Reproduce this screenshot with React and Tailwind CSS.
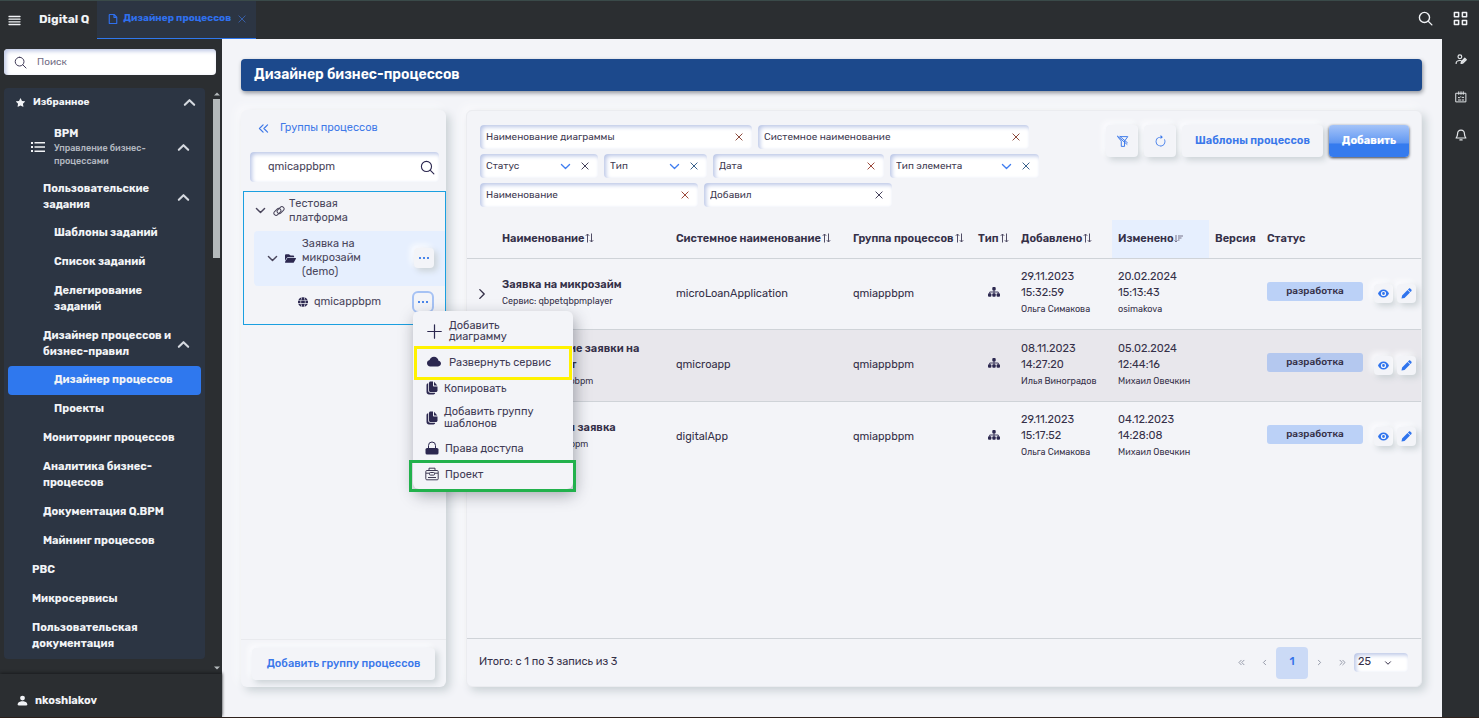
import { BsStarFill, BsPersonFill, BsCloudFill, BsArrowClockwise } from "react-icons/bs";
import { FaFolderOpen, FaGlobe } from "react-icons/fa6";
import { PiFileBold } from "react-icons/pi";

const Stroke = ({ d, size = 16, width = 1.5, box = 16, className = "" }) => (
  <svg width={size} height={size} viewBox={`0 0 ${box} ${box}`} fill="none" stroke="currentColor"
    strokeWidth={width} strokeLinecap="round" strokeLinejoin="round" className={`shrink-0 ${className}`} aria-hidden="true">
    <path d={d} />
  </svg>
);

const SEARCH = "M6.9 1.5a5.4 5.4 0 1 1 0 10.8a5.4 5.4 0 0 1 0-10.8M10.8 10.8l4 4";
const UP = "M3 10.5l5-5l5 5";
const DOWN = "M3 5.5l5 5l5-5";
const RIGHT = "M5.5 3l5 5l-5 5";
const CROSS = "M3 3l10 10M13 3l-10 10";

const menu = [
  { text: "Шаблоны заданий", level: 3 },
  { text: "Список заданий", level: 3 },
  { text: "Делегирование заданий", level: 3, narrow: true },
  { text: "Дизайнер процессов и бизнес-правил", level: 2, open: true },
  { text: "Дизайнер процессов", level: 3, active: true },
  { text: "Проекты", level: 3 },
  { text: "Мониторинг процессов", level: 2 },
  { text: "Аналитика бизнес-процессов", level: 2, narrow: true },
  { text: "Документация Q.BPM", level: 2 },
  { text: "Майнинг процессов", level: 2 },
  { text: "РВС", level: 1 },
  { text: "Микросервисы", level: 1 },
  { text: "Пользовательская документация", level: 1, narrow: true },
];
const indent = { 1: "pl-6", 2: "pl-[35px]", 3: "pl-[46px]" };

const Chevron = () => <Stroke d={UP} size={15} width={2.2} className="text-[#d5d9df]" />;

function MenuItem({ text, level, open, active, narrow }) {
  return (
    <li>
      <a href="#" aria-current={active ? "page" : undefined}
        className={`flex items-center justify-between rounded pr-2.5 pt-1.5 ${open ? "pb-1.5" : "pb-[7px]"} ${indent[level]} ${active ? "bg-[#2f78ee]" : ""}`}>
        <span className={narrow ? "w-[120px]" : "whitespace-normal"}>{text}</span>
        {open && <Chevron />}
      </a>
    </li>
  );
}

function Sidebar() {
  return (
    <aside className="flex w-[222px] shrink-0 flex-col bg-[#2b2e31] text-[11px] font-bold leading-4 text-[#f1f3f6]">
      <label className="ml-1 mr-1.5 mt-2.5 flex h-[26px] items-center gap-2.5 rounded bg-white pl-2.5 shadow-[inset_2px_2px_4px_#bcc6e4]">
        <Stroke d={SEARCH} size={13} width={1.2} className="text-[#3b3553]" />
        <input aria-label="Поиск" placeholder="Поиск" className="w-full bg-transparent text-[10px] font-normal outline-none placeholder:text-[#716d84]" />
      </label>
      <div className="mt-[13px] flex flex-1 pb-1">
        <nav className="ml-1 w-[201px] self-start rounded bg-[#2c3543] px-1">
          <button className="flex h-7 w-full items-center pl-2 pr-1 text-left text-[10px]">
            <BsStarFill className="mr-2 size-[9px]" />
            <span className="flex-1">Избранное</span>
            <Chevron />
          </button>
          <ul>
            <li>
              <a href="#" className="flex items-center pb-[7px] pl-[22px] pr-2.5 pt-2.5">
                <svg width="16" height="12" viewBox="0 0 16 12" fill="currentColor" className="mr-2 shrink-0" aria-hidden="true">
                  <path d="M1 1h2v2H1zM1 5h2v2H1zM1 9h2v2H1zM4.500 1h10.500v1.600H4.500zM4.500 5.200h10.500v1.600H4.500zM4.500 9.400h10.500v1.600H4.500z" />
                </svg>
                <span className="flex-1">
                  BPM
                  <span className="block text-[9px] font-medium leading-[13px] text-[#b4b9c1]">Управление бизнес-<br />процессами</span>
                </span>
                <Chevron />
              </a>
            </li>
            <li>
              <a href="#" className="flex items-center justify-between pb-1.5 pl-[35px] pr-2.5 pt-1.5">
                <span className="w-[120px]">Пользовательские задания</span>
                <Chevron />
              </a>
            </li>
            {menu.map((m) => <MenuItem key={m.text} {...m} />)}
          </ul>
        </nav>
        <div className="ml-2 flex w-[7px] flex-col items-center text-[#b4b9bb]" aria-hidden="true">
          <svg width="6" height="4" viewBox="0 0 6 4" className="mb-[3px] mt-1"><path d="M0 3.5L3 .5L6 3.5z" fill="currentColor" /></svg>
          <div className="h-[159px] w-full bg-[#b4b9bb]" />
          <svg width="6" height="4" viewBox="0 0 6 4" className="mt-auto"><path d="M0 .5L3 3.5L6 .5z" fill="currentColor" /></svg>
        </div>
      </div>
      <div className="flex h-[43px] items-center gap-1.5 pl-4 pt-2.5 shadow-[0_-1px_3px_#191b1d]">
        <BsPersonFill className="size-[13px]" />
        nkoshlakov
      </div>
    </aside>
  );
}

const raised = "bg-[#f3f4f8] shadow-[3px_3px_6px_#cbd2d6,-3px_-3px_6px_#fdfdff]";
const inset = "bg-white shadow-[inset_2px_2px_4px_#b9c5e6]";

function Dots({ active }) {
  return (
    <button aria-label="Действия" className={`flex items-center justify-center gap-0.5 ${active ? "size-[22px] rounded-md border-2 border-[#a6c2f4] bg-[#f3f4f8]" : "size-5 rounded " + raised}`}>
      <i className="size-0.5 bg-[#4b86ea]" /><i className="size-0.5 bg-[#4b86ea]" /><i className="size-0.5 bg-[#4b86ea]" />
    </button>
  );
}

const LockIcon = () => (
  <svg width="14" height="14" viewBox="0 0 14 14" aria-hidden="true">
    <path d="M3.500 7.500V4.500a3.500 3.500 0 0 1 7 0v3" fill="none" stroke="currentColor" />
    <rect x=".5" y="7" width="13" height="6.500" rx="1.600" fill="currentColor" />
  </svg>
);
const CopyIcon = () => (
  <svg width="12" height="14" viewBox="0 0 12 14" className="shrink-0 text-[#2c2850]" aria-hidden="true">
    <path fill="currentColor" d="M4.500.5H7V4.500c0 .6.400 1 1 1h3.500V9.500c0 .8-.7 1.500-1.500 1.500H4.500C3.700 11 3 10.300 3 9.500V2C3 1.200 3.700.5 4.500.5M8 .7l3.300 3.800H8z" />
    <path fill="currentColor" d="M2.200 2.200v7.600c0 1.100.9 2 2 2h5c-.1 1-.8 1.700-1.700 1.700H3C1.600 13.500.5 12.400.5 11V4c0-.9.700-1.700 1.700-1.800" />
  </svg>
);
const CaseIcon = () => (
  <svg width="14" height="14" viewBox="0 0 14 14" fill="none" stroke="currentColor" className="shrink-0" aria-hidden="true">
    <rect x=".8" y="3.500" width="12.400" height="9.300" rx="1" />
    <path d="M4 3.300V1.200h6v2.100M1 6.200h3.500M9.500 6.200H13M3 10.500h8" />
    <rect x="4.500" y="5.500" width="5" height="2.600" rx=".8" />
  </svg>
);

function ContextMenu() {
  const item = "flex w-full items-center text-left";
  return (
    <div role="menu" className="absolute left-px top-5 z-10 w-40 rounded-md bg-[#f3f4f8] pt-[7px] text-[11px] leading-[11px] text-[#3f3b55] shadow-[2px_6px_16px_rgba(40,45,60,0.4)]">
      <button role="menuitem" className={`${item} h-7 gap-[7px] pb-0.5 pl-3.5 pr-8`}>
        <Stroke d="M8 .8v14.400M.8 8h14.400" size={15} width={1.300} className="text-[#2c2850]" />Добавить диаграмму
      </button>
      <button role="menuitem" className="ml-px flex h-[34px] w-[158px] items-center gap-2 border-[3px] border-[#fff200] pb-0.5 pl-2.5 text-left">
        <BsCloudFill className="size-3.5 shrink-0 text-[#2c2850]" />Развернуть сервис
      </button>
      <button role="menuitem" className={`${item} h-4 gap-1.5 pl-[13px]`}>
        <CopyIcon />Копировать
      </button>
      <button role="menuitem" className={`${item} mt-2 h-7 gap-1.5 pl-[13px] pr-5 leading-3`}>
        <CopyIcon />Добавить группу шаблонов
      </button>
      <button role="menuitem" className={`${item} mt-1.5 h-5 gap-1.5 pl-3`}>
        <span className="text-[#2c2850]"><LockIcon /></span>Права доступа
      </button>
      <button role="menuitem" className="-mb-[3px] -ml-1 mt-0.5 flex h-8 w-[167px] items-center gap-1.5 border-[3px] border-[#22b14c] pb-1 pl-[13px] text-left">
        <CaseIcon />Проект
      </button>
    </div>
  );
}

function Groups() {
  return (
    <section className="flex w-[205px] shrink-0 flex-col rounded-md bg-[#f3f4f8] text-[#4a465c] shadow-[4px_4px_8px_#cbd2d6,-4px_-4px_8px_#fafafc]">
      <button className="flex h-9 items-center gap-2.5 pl-4 pt-px text-[11px] text-[#3f79e8]">
        <Stroke d="M7.500 3.500L3 8l4.500 4.500M13 3.500L8.500 8l4.500 4.500" size={13} />Группы процессов
      </button>
      <label className={`ml-[9px] mr-[7px] mt-1.5 flex h-[30px] items-center rounded pl-[18px] pr-1 ${inset}`}>
        <input aria-label="Поиск группы" defaultValue="qmicappbpm" className="min-w-0 flex-1 bg-transparent text-[11px] outline-none" />
        <Stroke d={SEARCH} size={15} width={1.200} className="text-[#2c2850]" />
      </label>
      <div className="ml-0.5 mt-[9px] h-[134px] border border-[#1a9fe0] text-[11px] leading-[14px]">
        <div className="flex h-[39px] items-center pb-0.5 pl-2.5">
          <Stroke d={DOWN} size={13} width={1.800} className="mr-1.5" />
          <svg width="12" height="12" viewBox="0 0 12 12" fill="none" stroke="currentColor" strokeWidth="1" className="mr-1 shrink-0" aria-hidden="true">
            <rect x="0.400" y="4.700" width="8" height="4.400" rx="2.200" transform="rotate(-45 4.400 6.900)" />
            <rect x="3.600" y="2.900" width="8" height="4.400" rx="2.200" transform="rotate(-45 7.600 5.100)" />
          </svg>
          <span className="w-20">Тестовая платформа</span>
        </div>
        <div className="ml-2.5 flex h-[55px] items-center rounded-l bg-[#e6effe] pb-px pl-3 pr-[11px]">
          <Stroke d={DOWN} size={13} width={1.800} className="mr-1.5" />
          <FaFolderOpen className="mr-1.5 size-[11px] shrink-0 text-[#2c2850]" />
          <span className="w-[70px] flex-1 pr-12">Заявка на микрозайм (demo)</span>
          <Dots />
        </div>
        <div className="flex h-8 items-center pl-[54px] pr-[11px]">
          <FaGlobe className="mr-1.5 size-2.5 shrink-0 text-[#2c2850]" />
          <span className="flex-1">qmicappbpm</span>
          <div className="relative">
            <Dots active />
            <ContextMenu />
          </div>
        </div>
      </div>
      <div className="mt-auto border-t border-[#e9eaee] px-[11px] pb-[7px] pt-2">
        <button className={`h-8 w-full rounded text-[11px] font-medium text-[#3b78ea] ${raised}`}>Добавить группу процессов</button>
      </div>
    </section>
  );
}

function Filter({ label, width, select, tone = "text-[#44405a]" }) {
  return (
    <div className={`flex h-6 items-center gap-2 rounded pl-1.5 pr-2 text-[#3f3b52] ${inset} ${width}`}>
      {select ? (
        <>
          <select aria-label={label} className="min-w-0 flex-1 appearance-none bg-transparent outline-none"><option>{label}</option></select>
          <Stroke d={DOWN} size={13} width={1.600} className="text-[#3f7df0]" />
        </>
      ) : (
        <input aria-label={label} placeholder={label} className="min-w-0 flex-1 bg-transparent outline-none placeholder:text-[#3f3b52]" />
      )}
      <button aria-label={`Очистить: ${label}`} className={tone}><Stroke d={CROSS} size={10} width={1.600} /></button>
    </div>
  );
}

const SortIcon = () => (
  <svg width="9" height="10" viewBox="0 0 9 10" fill="none" stroke="#514d66" strokeWidth="1" className="ml-px inline-block align-[-1px]" aria-hidden="true">
    <path d="M2.500 9.500V1M.8 2.800L2.500 1l1.700 1.800M6.500.500V9M4.800 7.200L6.500 9l1.700-1.800" />
  </svg>
);
const SortDesc = () => (
  <svg width="9" height="8" viewBox="0 0 9 8" fill="none" stroke="#777389" strokeWidth="1" className="inline-block" aria-hidden="true">
    <path d="M2 0v7M.5 5.500L2 7l1.500-1.500M4 1h5M4 3h3.500M4 5h1.500" />
  </svg>
);
const TreeIcon = () => (
  <svg width="12" height="10" viewBox="0 0 12 10" className="mx-auto text-[#2c2850]" aria-hidden="true">
    <g fill="currentColor">
      <rect x="4.300" y="0" width="3.400" height="3.400" rx="1" />
      <rect x="0" y="6.300" width="3.400" height="3.400" rx="1" />
      <rect x="4.300" y="6.300" width="3.400" height="3.400" rx="1" />
      <rect x="8.600" y="6.300" width="3.400" height="3.400" rx="1" />
    </g>
    <path d="M6 3v3.500M1.700 6.500V5h8.600v1.500" fill="none" stroke="currentColor" strokeWidth=".9" />
  </svg>
);

const rows = [
  { name: "Заявка на микрозайм", service: "qbpetqbpmplayer", sys: "microLoanApplication", group: "qmiappbpm", added: ["29.11.2023", "15:32:59", "Ольга Симакова"], changed: ["20.02.2024", "15:13:43", "osimakova"], expand: true },
  { name: "Рассмотрение заявки на микрокредит", service: "qmicappbpm", sys: "qmicroapp", group: "qmiappbpm", added: ["08.11.2023", "14:27:20", "Илья Виноградов"], changed: ["05.02.2024", "12:44:16", "Михаил Овечкин"] },
  { name: "Электронная заявка", service: "qmiappbpm", sys: "digitalApp", group: "qmiappbpm", added: ["29.11.2023", "15:17:52", "Ольга Симакова"], changed: ["04.12.2023", "14:28:08", "Михаил Овечкин"] },
];

const Stamp = ({ value: [date, time, who] }) => (
  <>{date}<br />{time}<small className="block whitespace-nowrap text-[9px] leading-[17px]">{who}</small></>
);

function Diagrams() {
  const th = "px-1.5 text-left font-semibold whitespace-nowrap";
  return (
    <section className="flex min-w-0 flex-1 flex-col rounded-md border border-[#ebecf0] bg-[#f3f4f8] text-[#353048] shadow-[4px_4px_8px_#cbd2d6,-4px_-4px_8px_#fafafc]">
      <div className="flex items-start justify-between pl-[13px] pr-3 pt-3.5">
        <div className="flex max-w-[564px] flex-wrap gap-x-1.5 gap-y-[5px] text-[10px]">
          <Filter label="Наименование диаграммы" width="w-[272px]" tone="text-[#8c4a3c]" />
          <Filter label="Системное наименование" width="w-[271px]" tone="text-[#8c4a3c]" />
          <Filter label="Статус" width="w-[118px]" select />
          <Filter label="Тип" width="w-[103px]" select tone="text-[#38618c]" />
          <Filter label="Дата" width="w-[171px]" tone="text-[#9c4a3c]" />
          <Filter label="Тип элемента" width="w-[149px]" select tone="text-[#38618c]" />
          <Filter label="Наименование" width="w-[218px]" tone="text-[#9c4a3c]" />
          <Filter label="Добавил" width="w-[188px]" />
        </div>
        <div className="flex gap-1.5 text-[11px] font-semibold text-[#3b78ea]">
          <button aria-label="Сбросить фильтры" className={`flex size-8 items-center justify-center rounded ${raised}`}>
            <Stroke d="M5 2h9.500L10.500 7.500v6.500H6.500V7.500L2 2M2 1.500l11.500 10M5 2l9 7.500" size={13} width={1.200} />
          </button>
          <button aria-label="Обновить" className={`flex size-8 items-center justify-center rounded ${raised}`}><BsArrowClockwise className="size-[13px]" /></button>
          <button className={`h-8 w-[141px] rounded ${raised}`}>Шаблоны процессов</button>
          <button className="h-8 w-20 rounded bg-linear-to-b from-[#a4c3f8] from-0% via-[#6298f2] via-55% to-[#357bee] to-60% font-bold text-white shadow-[0_1px_3px_#343a48]">Добавить</button>
        </div>
      </div>

      <table className="mt-[13px] w-full table-fixed border-collapse text-[11px] leading-4">
        <colgroup>
          <col className="w-[29px]" /><col /><col className="w-[177px]" /><col className="w-[125px]" /><col className="w-[43px]" />
          <col className="w-[97px]" /><col className="w-[97px]" /><col className="w-[52px]" /><col className="w-[108px]" /><col className="w-[52px]" />
        </colgroup>
        <thead>
          <tr className="h-[38px] border-b border-[#cfd3d8]">
            <td />
            <th className={th}>Наименование<SortIcon /></th>
            <th className={th}>Системное наименование<SortIcon /></th>
            <th className={th}>Группа процессов<SortIcon /></th>
            <th className={th}>Тип<SortIcon /></th>
            <th className={th}>Добавлено<SortIcon /></th>
            <th className={`${th} bg-[#e6effe]`}>Изменено<SortDesc /></th>
            <th className={th}>Версия</th>
            <th className={th}>Статус</th>
            <td />
          </tr>
        </thead>
        <tbody>
          {rows.map((r, i) => (
            <tr key={r.sys} className={`${i === 1 ? "h-[72px] bg-[#e8e7ec]" : "h-[71px]"} ${i < 2 ? "border-b border-[#cfd3d8]" : ""}`}>
              <td className="pl-2">{r.expand && <button aria-label="Развернуть" className="block"><Stroke d={RIGHT} size={14} width={1.600} /></button>}</td>
              <td className="px-1.5 font-semibold">{r.name}<small className="block text-[9px] font-normal leading-[17px]">Сервис: {r.service}</small></td>
              <td className="px-1.5">{r.sys}</td>
              <td className="px-1.5">{r.group}</td>
              <td className="px-1.5 pb-1"><TreeIcon /></td>
              <td className="px-1.5"><Stamp value={r.added} /></td>
              <td className="px-1.5"><Stamp value={r.changed} /></td>
              <td />
              <td className="px-1.5 pb-[5px]"><span className="block h-[19px] rounded-[3px] bg-[#3b82f6]/30 text-center text-[10px] font-medium leading-[19px]">разработка</span></td>
              <td>
                <div className="flex gap-1 pl-[5px] text-[#2f74ee]">
                  <button aria-label="Просмотр" className={`flex size-[19px] items-center justify-center rounded ${raised}`}>
                    <svg width="11" height="9" viewBox="0 0 11 9" aria-hidden="true"><path fillRule="evenodd" fill="currentColor" d="M5.500.5C2.800.5.900 2.500 0 4.500c.900 2 2.800 4 5.500 4s4.600-2 5.500-4c-.900-2-2.800-4-5.500-4M5.500 1.900a2.600 2.600 0 1 1 0 5.200a2.600 2.600 0 0 1 0-5.200M5.500 3.100a1.400 1.400 0 1 0 0 2.800a1.400 1.400 0 0 0 0-2.800" /></svg>
                  </button>
                  <button aria-label="Изменить" className={`flex size-[19px] items-center justify-center rounded ${raised}`}>
                    <svg width="11" height="11" viewBox="0 0 11 11" aria-hidden="true"><path fill="currentColor" d="M.5 10.500l.6-3L6.500 2l2.500 2.500L3.500 9.900zM6.900 1.600l.9-.9c.5-.5 1.200-.4 1.600 0l.9.9c.4.400.5 1.100 0 1.600l-.9.9z" /></svg>
                  </button>
                </div>
              </td>
            </tr>
          ))}
        </tbody>
      </table>

      <footer className="mt-auto flex h-12 items-center border-t border-[#cfd3d8] pl-3 pr-[13px] text-[11px]">
        <span className="flex-1">Итого: с 1 по 3 запись из 3</span>
        <div className="flex items-center text-[#858b9b]">
          <button aria-label="Первая" className="flex w-[23px] justify-center"><Stroke d="M7.500 4L3.500 8l4 4M12.500 4l-4 4l4 4" size={9} /></button>
          <button aria-label="Предыдущая" className="flex w-[23px] justify-center"><Stroke d="M10 4L6 8l4 4" size={9} /></button>
          <button aria-current="page" className="size-8 rounded bg-[#cbdaf6] font-medium text-[#3473ea]">1</button>
          <button aria-label="Следующая" className="flex w-[23px] justify-center"><Stroke d="M6 4l4 4l-4 4" size={9} /></button>
          <button aria-label="Последняя" className="flex w-[23px] justify-center"><Stroke d="M3.500 4l4 4l-4 4M8.500 4l4 4l-4 4" size={9} /></button>
          <div className={`flex h-[19px] w-[54px] items-center rounded pl-1 pr-4 text-[#353048] ${inset}`}>
            <select aria-label="Записей на странице" className="w-full appearance-none bg-transparent outline-none"><option>25</option></select>
            <Stroke d={DOWN} size={8} width={2} />
          </div>
        </div>
      </footer>
    </section>
  );
}

export default function App() {
  return (
    <div className="flex min-h-screen flex-col border-b border-t border-b-[#2e221d] border-t-[#3a4a49] bg-[#f3f4f8] font-['Rubik',Inter,sans-serif]">
      <header className="flex h-[38px] items-center bg-[#2b2e31] text-[#f1f3f6]">
        <button aria-label="Меню" className="ml-2 mr-[18px]">
          <Stroke d="M1 2.500h11M1 5.200h11M1 7.800h11M1 10.500h11" size={13} box={13} width={1.300} />
        </button>
        <span className="pb-0.5 text-[12px] font-bold">Digital Q</span>
        <div className="ml-2 flex h-full w-[159px] items-center border-b border-[#2f78ee] bg-[#2c3543] pb-0.5 pl-2.5 font-bold text-[#2f70ee]">
          <PiFileBold className="mr-1 size-3 shrink-0" />
          <a href="#" className="whitespace-nowrap text-[10px]">Дизайнер процессов</a>
          <button aria-label="Закрыть вкладку" className="ml-1.5 text-[#385fa8]"><Stroke d={CROSS} size={10} width={1.600} /></button>
        </div>
        <button aria-label="Поиск" className="ml-auto mr-5 pb-1"><Stroke d={SEARCH} size={15} width={1.500} /></button>
        <button aria-label="Приложения" className="mr-[11px] pb-1">
          <Stroke d="M1.500 1.500h4.500v4.500H1.500zM10 1.500h4.500v4.500H10zM1.500 10h4.500v4.500H1.500zM10 10h4.500v4.500H10z" size={15} width={1.600} />
        </button>
      </header>
      <div className="flex flex-1">
        <Sidebar />
        <main className="flex min-w-0 flex-1 flex-col pb-[30px] pl-[19px] pr-5 pt-5">
          <h1 className="rounded bg-[#1c498c] pl-[13px] text-[14px] font-semibold leading-8 text-white shadow-[1px_2px_4px_#8f939b]">Дизайнер бизнес-процессов</h1>
          <div className="mt-[19px] flex flex-1 gap-5">
            <Groups />
            <Diagrams />
          </div>
        </main>
        <aside className="flex w-[37px] shrink-0 flex-col items-center gap-[26px] bg-[#2b2e31] pt-3.5 text-[#e4e7ea]">
          <button aria-label="Профиль">
            <Stroke d="M6.500 2.500a2.500 2.500 0 1 1 0 5a2.500 2.500 0 0 1 0-5M1.500 14c0-3 2-4 5-4h1.500M8 14l.5-2.500l4.500-4.500l2 2l-4.500 4.500zM9.500 12l4-4" size={12} width={1.600} />
          </button>
          <button aria-label="Задачи">
            <Stroke d="M1.500 3h13v11.500h-13zM5 1v3.500M8 1v3.500M11 1v3.500M4.500 8.500l1 1l2-2M9.500 8.500h2M4.500 12h3M9.500 12h2" size={12} width={1.300} />
          </button>
          <button aria-label="Уведомления">
            <Stroke d="M8 1.500c-3 0-4.500 2-4.500 4.500c0 3-1 4.500-2 6h13c-1-1.500-2-3-2-6c0-2.500-1.500-4.500-4.500-4.500M6.500 14.500h3" size={12} width={1.600} />
          </button>
        </aside>
      </div>
    </div>
  );
}
